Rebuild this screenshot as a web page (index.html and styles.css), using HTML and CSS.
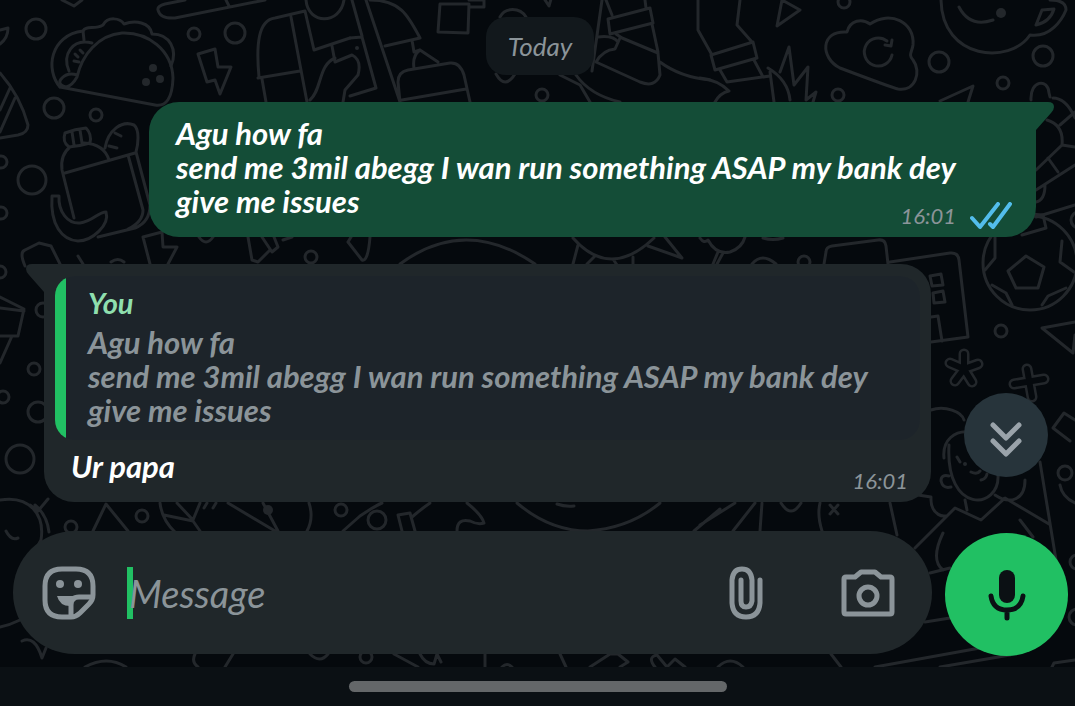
FILE: index.html
```html
<!DOCTYPE html>
<html lang="en">
<head>
  <meta charset="UTF-8" />
  <title>Chat</title>
  <meta name="viewport" content="width=device-width, initial-scale=1.0" />
  <link rel="stylesheet" href="styles.css">
</head>
<body>
  <!-- doodle wallpaper -->
  <svg class="wallpaper" viewBox="0 0 1075 706" preserveAspectRatio="xMinYMin slice" aria-hidden="true">
    <!-- top left: taco, pizza, basket -->
    <path d="M62 0L74 6L82 0M0 30L8 28Q8 38 0 44M265 0L175 18Q160 19 158 10Q157 6 165 4L185 0M226 0l3 6" />
    <path d="M60 87C45 70 50 35 83 31C86 25 95 30 103 25C108 16 120 18 124 24C135 20 150 22 152 34C170 34 178 50 171 66" />
    <path d="M60 87L155 105Q172 108 173 78C172 50 148 32 122 33C98 35 82 55 77 77Q72 86 66 87Q56 84 62 78Q68 72 77 75M83 31L84 40M92 43C72 38 62 55 69 71M75 54l3 3M80 50l3 3M74 61l5 1" />
    <path d="M198 54L215 49L218 67L231 67L220 94L215 80L207 82Z" />
    <path d="M0 73C15 90 24 110 28 125Q28 133 18 135L0 138M10 88L0 110M15 98L0 132" />
    <path d="M65 133Q75 129 86 128Q92 134 90 143Q80 146 69 147Q62 142 65 133M72 132l2 13M80 130l2 13M70 147Q60 155 62 170L74 218M65 173L135 153M84 143Q104 144 109 160M105 148C108 130 122 120 134 125C140 130 138 145 136 152L150 205Q150 222 135 228L98 237M128 155L143 210Q143 222 128 229M115 133l6 3M109 146l8 2" />
    <path d="M52 196L59 196C58 212 68 224 80 223C92 222 98 212 106 212C110 225 92 241 78 241C62 240 50 225 52 196Z" />
    <!-- top middle -->
    <path d="M259 77C256 45 258 20 275 18L305 11M258 78L300 71M291 17L307 102M262 79L266 102M305 11L314 50L350 38M306 0C308 25 340 25 344 0M332 46L335 62L352 55Q362 60 358 75L345 90L343 102M335 58C318 65 322 90 310 100" />
    <path d="M352 0L362 36M366 0L400 102M370 0C400 0 408 15 420 38L385 46M412 40L414 52L420 50L438 62M414 68q-2-12 6-18M400 102L398 82Q398 72 408 70L450 63Q460 62 464 75L470 102M402 100L466 89M350 38L362 37L376 88L350 96" />
    <path d="M440 4L469 4L468 33L438 32ZM469 0L484 0L484 7L470 7M500 17C505 7 520 7 526 17M496 74Q505 90 515 74M545 0l4 6l2-7M602 0L592 71" />
    <path d="M606 0L612 15M645 0L646 8M608 19L650 8L653 23L610 34ZM616 34L622 38L658 53L660 75Q655 88 640 82L596 62Q603 50 615 49L620 38M652 24L658 52M598 37q15-2 20 5M660 62Q680 77 710 80M560 75L580 85L590 102M576 75Q590 95 620 102" />
    <path d="M698 0L698 30L712 55M740 0L737 25L752 42M711 55L753 42L757 58L715 70ZM720 70L727 82L770 76M754 60L762 75M700 78Q718 80 729 91Q720 93 715 102M768 68Q788 80 790 100M770 72L774 102M780 72L789 47L794 85L808 67L806 100L816 92L813 102M782 0L800 10L777 26Z" />
    <!-- top right: cloud, mug, ball -->
    <path d="M840 68C820 58 820 30 847 32C850 20 862 18 870 24C890 10 915 22 913 45C912 52 908 55 913 60C922 72 915 92 898 89Q893 88 840 68M887 41A14 14 0 1 0 892 55M892 40l-1 6l-6-1" />
    <path d="M941 0C942 60 1010 65 1030 35C1050 38 1062 20 1066 10Q1066 0 1050 0M959 7Q970 28 993 20M1036 25L1042 10L1054 9Q1050 22 1036 25M940 101L973 86L968 102" />
    <path d="M1031 100C1030 80 1048 78 1049 93L1050 97M1053 98Q1066 98 1075 118M1060 125L1075 112M1047 120Q1064 125 1062 145L1036 170M1062 145L1075 147M1048 158L1058 172M1036 190L1075 165M1045 185q0 15-9 17M1036 217L1075 205" />
    <circle cx="1030" cy="263" r="47" />
    <path d="M1026 256L1044 267L1038 288L1016 288L1008 271ZM995 236L995 258L985 270M992 285L1006 293L1012 305M1042 305L1048 296L1066 288M1062 241L1060 262L1074 272M1022 235L1046 228L1043 215L1030 214" />
    <path d="M824 264L826 252Q826 247 832 246L878 240Q885 239 886 246L888 264M890 262L950 253Q958 252 959 260L968 337L931 342M930 276L941 274L943 285L932 286ZM933 293L943 291L945 302L934 303ZM931 317L938 316L942 341" />
    <path d="M1075 322L1042 328L1073 353L1075 335M1075 420L1064 413L1053 428L1070 441" />
    <g class="thick"><path d="M964 369V354M964 369L950 363M964 369L978 364M964 369L955 381M964 369L972 382M1027 369L1032 397M1014 384L1044 379" /></g>
    <g class="hollow"><path d="M964 369V354M964 369L950 363M964 369L978 364M964 369L955 381M964 369L972 382M1027 369L1032 397M1014 384L1044 379" /></g>
    <!-- person with book -->
    <path d="M931 410C945 405 962 412 964 420M944 458C942 440 955 430 970 432M949 445C945 515 1000 510 998 475M949 476q-8-2-8 5q2 8 10 6M957 457l3 5M971 472q6 3 9-1M981 480q5-1 6-6M918 495l13 2C930 515 945 520 950 513M965 500L967 510M995 495C1010 505 1025 500 1025 480M915 548L955 508L981 520L1005 498L1049 524M1040 462L1056 560M1020 520l13 17M943 533Q930 560 943 570M1060 485q2 12 15 18M930 573L950 568M925 622L950 618M875 667L980 648M940 667L1010 655M1052 667L1054 663L1075 660M831 654L841 667M718 667Q730 655 743 667" />
    <!-- left edge -->
    <path d="M0 297L24 309L18 336L0 336M0 308L24 311M12 336L0 363M25 266q-6-14 0-16l10-5l4-2l12 3L60 264M168 264L177 247L163 247L162 232L143 237L150 264M78 256l5 8M111 262q7-5 13 0" />
    <!-- strip between the bubbles -->
    <path d="M199 237q7 10 14 0M248 237L252 260L258 262L270 250M262 237l10 15l6-5l-4-10M283 240l9-3M348 242L362 260Q368 262 370 237M348 242l3-5M400 264Q465 216 535 264M573 238Q610 280 654 238M578 245L573 264M595 256L587 264M613 259l4 6M633 257v8M648 246L682 258L665 237M700 238q4 6 8 2Q716 255 730 252Q742 248 745 237M718 252L713 264M723 253L717 264M752 264q10-12 24 0M763 238q10 3 20 0" />
    <!-- strip above the composer -->
    <path d="M0 500C30 495 45 515 41 540L30 560M35 505q12 10 14 27M30 505l8 6l10-12M6 531q5 10 12 7M0 627Q10 625 20 620M22 641Q35 635 42 658L46 648M93 531L106 504L128 531M160 503Q162 520 175 532M164 515L193 521L200 531M177 503L193 520L200 503M204 508l3-5M213 508l3-5M228 503L275 531M263 503L278 531M309 503q5 15-2 28M343 531L360 516M360 516q15-10 22-13M402 531L398 515L410 513L415 531M412 517Q420 510 430 503M467 503Q482 515 484 523Q478 525 470 521Q457 518 457 531M517 503Q550 531 588 531Q630 528 660 503M557 504q8 3 17 2M694 531L720 509M700 525L735 503M733 531L755 503M762 503L760 531M781 503q10 16 20 0M822 531Q817 515 820 503M890 503L897 535M830 505l8 9M838 505l-8 9" />
    <!-- strip below the composer -->
    <path d="M85 667Q107 655 126 667M195 654q-4 8 3 13M233 654l-8 13M310 654q10 10 18 0M394 654L418 667M420 654q5 10 14 10l3-10l4 8M485 654v13M502 667q5-5 10 0M560 654l6 13M590 667l20-13l8 0l10 8l-8 5M655 667q-8-10 2-12l10 12l8-8l10 8" />
    <g>
      <circle cx="36" cy="29" r="10" /><circle cx="194" cy="34" r="6" /><circle cx="235" cy="33" r="10" />
      <circle cx="54" cy="108" r="10" /><circle cx="96" cy="115" r="6" /><circle cx="32" cy="180" r="14" />
      <circle cx="1" cy="162" r="6" /><circle cx="1" cy="213" r="6" /><circle cx="542" cy="95" r="6" />
      <circle cx="844" cy="2" r="6" /><circle cx="939" cy="62" r="10" /><circle cx="1043" cy="56" r="10" />
      <circle cx="1003" cy="83" r="6" /><circle cx="838" cy="95" r="6" /><circle cx="1079" cy="220" r="8" />
      <circle cx="1001" cy="331" r="6" /><circle cx="1065" cy="473" r="7" /><circle cx="0" cy="272" r="6" />
      <circle cx="34" cy="369" r="6" /><circle cx="3" cy="397" r="6" /><circle cx="38" cy="412" r="10" />
      <circle cx="20" cy="459" r="14" /><circle cx="43" cy="310" r="7" /><circle cx="311" cy="257" r="6" />
      <circle cx="804" cy="262" r="6" /><circle cx="71" cy="527" r="6" /><circle cx="142" cy="516" r="6" />
      <circle cx="341" cy="510" r="6" /><circle cx="377" cy="520" r="9" /><circle cx="366" cy="657" r="6" />
      <circle cx="1077" cy="562" r="7" /><circle cx="1077" cy="617" r="8" />
    </g>
    <g class="dots">
      <circle cx="153" cy="68" r="4" /><circle cx="160" cy="79" r="4" /><circle cx="146" cy="82" r="4" />
      <circle cx="1001" cy="13" r="5" /><circle cx="268" cy="510" r="5" /><circle cx="965" cy="464" r="2" />
      <circle cx="357" cy="48" r="2" />
    </g>
  </svg>

  <main class="chat">
    <div class="day">Today</div>

    <div class="bubble sent">
      <svg class="tail" viewBox="0 0 46 30" aria-hidden="true"><path d="M0 0H40Q46 0 46 5Q46 8 43 11L28 28V30H0Z" /></svg>
      <p class="text">Agu how fa<br>send me 3mil abegg I wan run something ASAP my bank dey give me issues</p>
      <div class="meta">
        <time>16:01</time>
        <svg class="ticks" viewBox="0 0 42 28" role="img" aria-label="Read"><path d="M2 16L10 25L28 2M20 22L23 25L40 2" /></svg>
      </div>
    </div>

    <div class="bubble received">
      <svg class="tail" viewBox="0 0 46 30" aria-hidden="true"><path d="M46 0H6Q0 0 0 5Q0 8 3 11L18 28V30H46Z" /></svg>
      <blockquote class="quote">
        <p class="author">You</p>
        <p>Agu how fa<br>send me 3mil abegg I wan run something ASAP my bank dey give me issues</p>
      </blockquote>
      <p class="text">Ur papa</p>
      <div class="meta"><time>16:01</time></div>
    </div>

    <button class="scroll-down" type="button" aria-label="Scroll to latest">
      <svg viewBox="0 0 32 36" aria-hidden="true"><path d="M3 4L16 17L29 4M3 20L16 33L29 20" /></svg>
    </button>
  </main>

  <form class="composer">
    <div class="field">
      <button class="icon" type="button" aria-label="Stickers">
        <svg class="sticker" viewBox="0 0 54 54">
          <path class="line" d="M20 3H34Q51 3 51 20V29Q51 34 47 38L38 47Q34 51 29 51H20Q3 51 3 34V20Q3 3 20 3Z" />
          <path class="line" d="M29 50V39Q29 31 37 31H50" />
          <path class="fill" d="M15 30H36Q31 33 30 40Q18 41 15 30Z" />
          <circle class="fill" cx="18" cy="18" r="4" /><circle class="fill" cx="36" cy="18" r="4" />
        </svg>
      </button>
      <span class="caret"></span>
      <input type="text" name="message" placeholder="Message" aria-label="Message" />
      <button class="icon" type="button" aria-label="Attach">
        <svg class="clip" viewBox="0 0 34 54"><path class="line" d="M31 14V37Q30 51 17 51Q4 51 3 37V14Q4 3 13 3Q22 3 23 14V35Q22 41 17 41Q12 41 12 35V14" /></svg>
      </button>
      <button class="icon" type="button" aria-label="Camera">
        <svg class="camera" viewBox="0 0 54 48">
          <path class="line" d="M5 8H14L20 3H34L40 8H49Q51 8 51 10V43Q51 45 49 45H5Q3 45 3 43V10Q3 8 5 8Z" />
          <circle class="line" cx="27" cy="27" r="9" />
        </svg>
      </button>
    </div>
    <button class="mic" type="button" aria-label="Record voice message">
      <svg viewBox="0 0 38 52" aria-hidden="true"><rect x="11" y="1" width="16" height="33" rx="8" /><path d="M3 27Q5 41 19 41Q33 41 35 27M19 41V49" /></svg>
    </button>
  </form>

  <div class="navbar"><span class="handle"></span></div>
</body>
</html>
```
FILE: styles.css
```css
* {
  box-sizing: border-box;
}
body {
  margin: 0;
  min-height: 100vh;
  display: flex;
  flex-direction: column;
  background: #05090d;
  color: #fff;
  font-family: Lato, "Liberation Sans", sans-serif;
  font-style: italic;
  font-size: 31px;
  line-height: 34px;
}
p, blockquote {
  margin: 0;
}
button {
  border: none;
  padding: 0;
  background: none;
  cursor: pointer;
}
svg {
  display: block;
  fill: none;
  stroke-linecap: round;
  stroke-linejoin: round;
}

.wallpaper {
  position: absolute;
  top: 0;
  left: 0;
  width: 100%;
  height: 100%;
  z-index: -1;
  stroke: #23272b;
  stroke-width: 3;
}
.wallpaper .thick {
  stroke-width: 11;
}
.wallpaper .hollow {
  stroke: #05090d;
  stroke-width: 6;
}
.wallpaper .dots {
  fill: #23272b;
  stroke: none;
}

/* messages */
.chat {
  position: relative;
  flex: 1;
  display: flex;
  flex-direction: column;
  align-items: flex-start;
  gap: 27px;
  padding: 17px 39px 29px 44px;
}
.day {
  align-self: center;
  padding: 12px 22px;
  border-radius: 20px;
  background: #12181c;
  color: #8b9499;
  font-size: 26px;
}
.bubble {
  position: relative;
  display: grid;
  max-width: calc(100% - 105px);
  border-radius: 30px;
}
.sent {
  align-self: flex-end;
  padding: 14px 24px 19px 27px;
  border-top-right-radius: 0;
  background: #144d37;
}
.received {
  padding: 12px 11px 19px;
  border-top-left-radius: 0;
  background: #20272a;
}
.tail {
  position: absolute;
  top: 0;
  width: 46px;
  height: 30px;
}
.sent .tail {
  right: -18px;
  fill: #144d37;
}
.received .tail {
  left: -18px;
  fill: #20272a;
}
.text {
  grid-column: 1;
  grid-row: 2;
  font-weight: bold;
}
.received .text {
  padding: 9px 16px 0;
}
.meta {
  grid-column: 1;
  grid-row: 2;
  align-self: end;
  justify-self: end;
  display: flex;
  align-items: center;
  gap: 14px;
  margin-bottom: -12px;
  color: #8b9499;
  font-size: 22px;
  line-height: 28px;
}
.received .meta {
  margin-right: 12px;
}
.ticks {
  width: 42px;
  height: 28px;
  stroke: #53bdeb;
  stroke-width: 4;
}
.quote {
  position: relative;
  grid-row: 1;
  padding: 10px 22px 13px 33px;
  border-radius: 20px;
  background: linear-gradient(to right, #21c063 11px, #1d242a 11px);
  color: #8b9499;
  font-weight: bold;
}
.author {
  margin-bottom: 5px;
  color: #8fdfae;
  font-size: 29px;
}
.scroll-down {
  position: absolute;
  right: 27px;
  bottom: 54px;
  display: grid;
  place-items: center;
  width: 84px;
  height: 84px;
  padding-top: 8px;
  border-radius: 50%;
  background: #27343b;
}
.scroll-down svg {
  width: 32px;
  height: 36px;
  stroke: #9aa3aa;
  stroke-width: 5;
}

/* composer */
.composer {
  display: flex;
  align-items: flex-start;
  gap: 13px;
  padding: 0 7px 11px 13px;
}
.field {
  flex: 1;
  min-width: 0;
  display: flex;
  align-items: center;
  height: 123px;
  padding: 0 37px 0 29px;
  border-radius: 62px;
  background: #20272a;
}
.caret {
  width: 6px;
  height: 52px;
  margin-left: 31px;
  background: #21c063;
}
.field input {
  flex: 1;
  min-width: 0;
  margin-left: -4px;
  padding: 0;
  border: none;
  outline: none;
  background: none;
  color: #fff;
  font: inherit;
  font-size: 38px;
}
.field input::placeholder {
  color: #8b9499;
}
.icon + .icon {
  margin-left: 78px;
}
.icon .line {
  stroke: #8b9499;
  stroke-width: 5;
}
.icon .fill {
  fill: #8b9499;
}
.sticker {
  width: 54px;
  height: 54px;
}
.clip {
  width: 34px;
  height: 54px;
}
.camera {
  width: 54px;
  height: 48px;
}
.mic {
  display: grid;
  place-items: center;
  width: 123px;
  height: 123px;
  margin-top: 2px;
  border-radius: 50%;
  background: #21c063;
}
.mic svg {
  width: 38px;
  height: 52px;
  fill: #0b1014;
}
.mic path {
  fill: none;
  stroke: #0b1014;
  stroke-width: 5;
}

.navbar {
  display: flex;
  justify-content: center;
  padding: 14px 0;
  background: #0b1014;
}
.handle {
  width: 378px;
  max-width: 60%;
  height: 11px;
  border-radius: 6px;
  background: #646769;
}
```
